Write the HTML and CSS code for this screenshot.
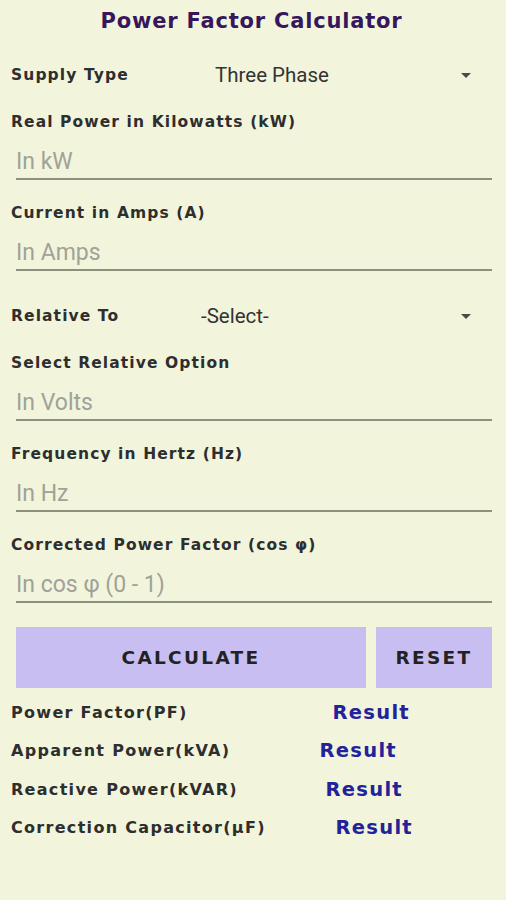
FILE: index.html
```html
<!DOCTYPE html>
<html>
<head>
<meta charset="utf-8">
<link rel="stylesheet" href="styles.css">
</head>
<body>
<div class="app">
  <h1 class="title">Power Factor Calculator</h1>

  <div class="spinner-row">
    <span class="label">Supply Type</span>
    <span class="spin-value spin-supply">Three Phase</span>
    <span class="arrow"></span>
  </div>

  <div class="label field-label first">Real Power in Kilowatts (kW)</div>
  <div class="input">In kW</div>

  <div class="label field-label">Current in Amps (A)</div>
  <div class="input">In Amps</div>

  <div class="spinner-row spinner-rel">
    <span class="label">Relative To</span>
    <span class="spin-value spin-rel">-Select-</span>
    <span class="arrow"></span>
  </div>

  <div class="label field-label first">Select Relative Option</div>
  <div class="input">In Volts</div>

  <div class="label field-label">Frequency in Hertz (Hz)</div>
  <div class="input">In Hz</div>

  <div class="label field-label">Corrected Power Factor (cos φ)</div>
  <div class="input">In cos φ (0 - 1)</div>

  <div class="buttons">
    <div class="btn btn-calc">CALCULATE</div>
    <div class="btn btn-reset">RESET</div>
  </div>

  <div class="results">
    <div class="res-row"><span class="label res-label">Power Factor(PF)</span><span class="result r1">Result</span></div>
    <div class="res-row"><span class="label res-label">Apparent Power(kVA)</span><span class="result r2">Result</span></div>
    <div class="res-row"><span class="label res-label">Reactive Power(kVAR)</span><span class="result r3">Result</span></div>
    <div class="res-row"><span class="label res-label">Correction Capacitor(μF)</span><span class="result r4">Result</span></div>
  </div>
</div>
</body>
</html>
```
FILE: styles.css
```css
html, body {
  margin: 0;
  padding: 0;
  background: #f2f5dc;
}
.app {
  width: 506px;
  height: 900px;
  box-sizing: border-box;
  padding: 0 14px 0 11px;
  display: flex;
  flex-direction: column;
}
.title {
  margin: 8px 0 0 0;
  text-align: center;
  font-family: "DejaVu Sans", sans-serif;
  font-weight: bold;
  font-size: 21px;
  line-height: 26px;
  color: #37175c;
  letter-spacing: 0.8px;
}
.label {
  font-family: "DejaVu Sans", sans-serif;
  font-weight: bold;
  font-size: 15.5px;
  letter-spacing: 1.1px;
  color: #2e2e2e;
  white-space: nowrap;
}
.spinner-row {
  display: flex;
  align-items: center;
  height: 48px;
  margin-top: 17px;
}
.spinner-row .label {
  width: 204px;
  flex: none;
}
.spin-value {
  font-family: Roboto, sans-serif;
  font-size: 20.5px;
  color: #333;
}
.arrow {
  margin-left: auto;
  margin-right: 21px;
  width: 0;
  height: 0;
  border-left: 5px solid transparent;
  border-right: 5px solid transparent;
  border-top: 5px solid #4a4a4a;
}
.spinner-rel {
  margin-top: 21px;
}
.spinner-rel .label { width: 190px; }
.field-label {
  margin-top: 23px;
  line-height: 20px;
}
.field-label.first {
  margin-top: 13px;
}
.input {
  margin: 0 0 0 5px;
  height: 48px;
  box-sizing: border-box;
  border-bottom: 2px solid #8c917b;
  font-family: Roboto, sans-serif;
  font-size: 23px;
  color: #a0a297;
  line-height: 34px;
  padding-top: 13px;
}
.buttons {
  display: flex;
  gap: 10px;
  margin: 24px 0 0 5px;
}
.btn {
  background: #c9bef2;
  height: 61px;
  display: flex;
  align-items: center;
  justify-content: center;
  font-family: "DejaVu Sans", sans-serif;
  font-weight: bold;
  font-size: 18.5px;
  color: #222;
  letter-spacing: 2.3px;
}
.btn-calc { width: 350px; }
.btn-reset { width: 116px; }
.results {
  margin-top: 5px;
  display: flex;
  flex-direction: column;
}
.res-row {
  display: flex;
  align-items: center;
  height: 38.5px;
}
.res-label {
  flex: none;
  font-size: 16px;
  letter-spacing: 1.3px;
}
.result {
  font-family: "DejaVu Sans", sans-serif;
  font-weight: bold;
  font-size: 19.5px;
  letter-spacing: 1.3px;
  color: #22229a;
}
.r1 { margin-left: auto; margin-right: 82px; }
.r2 { margin-left: auto; margin-right: 95px; }
.r3 { margin-left: auto; margin-right: 89px; }
.r4 { margin-left: auto; margin-right: 79px; }
```
